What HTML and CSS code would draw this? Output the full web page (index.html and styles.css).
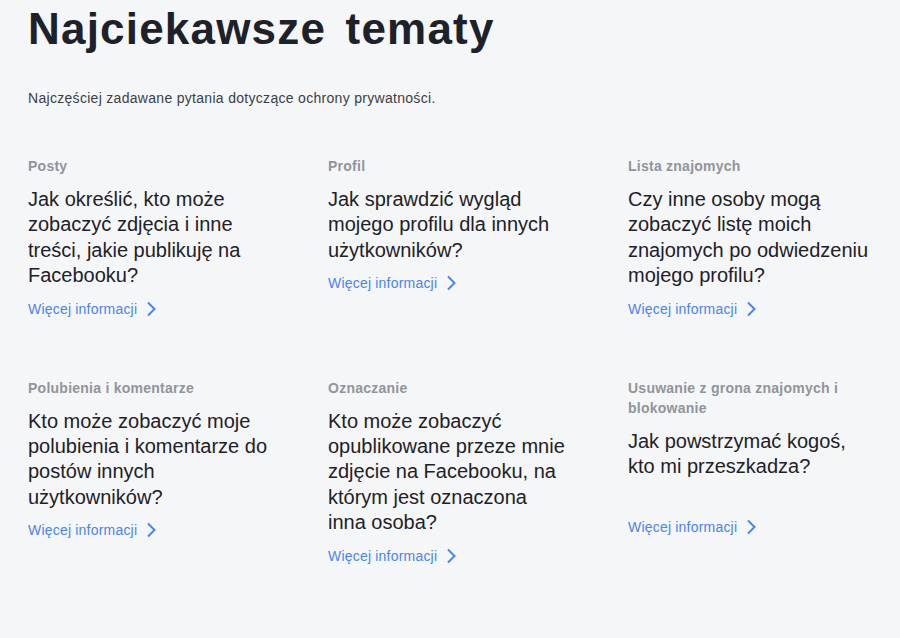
FILE: index.html
```html
<!DOCTYPE html>
<html lang="pl">
<head>
<meta charset="utf-8">
<title>Najciekawsze tematy</title>
<link rel="stylesheet" href="styles.css">
</head>
<body>
<main class="page">
  <h1 class="title">Najciekawsze tematy</h1>
  <p class="subtitle">Najczęściej zadawane pytania dotyczące ochrony prywatności.</p>
  <section class="grid">
    <article class="card">
      <div class="label">Posty</div>
      <div class="question">Jak określić, kto może zobaczyć zdjęcia i inne treści, jakie publikuję na Facebooku?</div>
      <a class="more" href="#">Więcej informacji <svg class="chev" width="10" height="16" viewBox="0 0 10 16"><path d="M2 1.5l6.5 6.5-6.5 6.5" fill="none" stroke="currentColor" stroke-width="2"/></svg></a>
    </article>
    <article class="card">
      <div class="label">Profil</div>
      <div class="question">Jak sprawdzić wygląd mojego profilu dla innych użytkowników?</div>
      <a class="more" href="#">Więcej informacji <svg class="chev" width="10" height="16" viewBox="0 0 10 16"><path d="M2 1.5l6.5 6.5-6.5 6.5" fill="none" stroke="currentColor" stroke-width="2"/></svg></a>
    </article>
    <article class="card">
      <div class="label">Lista znajomych</div>
      <div class="question">Czy inne osoby mogą zobaczyć listę moich znajomych po odwiedzeniu mojego profilu?</div>
      <a class="more" href="#">Więcej informacji <svg class="chev" width="10" height="16" viewBox="0 0 10 16"><path d="M2 1.5l6.5 6.5-6.5 6.5" fill="none" stroke="currentColor" stroke-width="2"/></svg></a>
    </article>
    <article class="card">
      <div class="label">Polubienia i komentarze</div>
      <div class="question">Kto może zobaczyć moje polubienia i komentarze do postów innych użytkowników?</div>
      <a class="more" href="#">Więcej informacji <svg class="chev" width="10" height="16" viewBox="0 0 10 16"><path d="M2 1.5l6.5 6.5-6.5 6.5" fill="none" stroke="currentColor" stroke-width="2"/></svg></a>
    </article>
    <article class="card">
      <div class="label">Oznaczanie</div>
      <div class="question">Kto może zobaczyć opublikowane przeze mnie zdjęcie na Facebooku, na którym jest oznaczona inna osoba?</div>
      <a class="more" href="#">Więcej informacji <svg class="chev" width="10" height="16" viewBox="0 0 10 16"><path d="M2 1.5l6.5 6.5-6.5 6.5" fill="none" stroke="currentColor" stroke-width="2"/></svg></a>
    </article>
    <article class="card">
      <div class="label">Usuwanie z grona znajomych i blokowanie</div>
      <div class="question question-spaced">Jak powstrzymać kogoś, kto mi przeszkadza?</div>
      <a class="more" href="#">Więcej informacji <svg class="chev" width="10" height="16" viewBox="0 0 10 16"><path d="M2 1.5l6.5 6.5-6.5 6.5" fill="none" stroke="currentColor" stroke-width="2"/></svg></a>
    </article>
  </section>
</main>
</body>
</html>
```

FILE: styles.css
```css
html, body {
  margin: 0;
  padding: 0;
  background: #f5f6f7;
}

body {
  font-family: "Liberation Sans", Arial, sans-serif;
  color: #1d2129;
}

.page {
  padding: 4px 0 0 28px;
}

.title {
  margin: 0;
  font-size: 44px;
  line-height: 50px;
  font-weight: bold;
  letter-spacing: 1.2px;
  word-spacing: 6px;
  color: #1d2129;
}

.subtitle {
  margin: 34px 0 0;
  font-size: 14px;
  line-height: 20px;
  letter-spacing: 0.3px;
  color: #3b3f46;
}

.grid {
  margin-top: 48px;
  display: grid;
  grid-template-columns: repeat(3, 300px);
  row-gap: 59px;
}

.card {
  width: 241px;
  display: flex;
  flex-direction: column;
  align-items: flex-start;
}

.label {
  font-size: 14px;
  line-height: 20px;
  font-weight: bold;
  letter-spacing: 0.25px;
  color: #90949c;
}

.question {
  margin-top: 11px;
  font-size: 20px;
  line-height: 25.4px;
  color: #1d2129;
}

.question-spaced {
  padding-bottom: 28px;
}

.more {
  margin-top: 10px;
  display: flex;
  align-items: center;
  gap: 9px;
  font-size: 14px;
  line-height: 20px;
  letter-spacing: 0.2px;
  color: #4a84f0;
  text-decoration: none;
}

.chev {
  display: block;
}
```
